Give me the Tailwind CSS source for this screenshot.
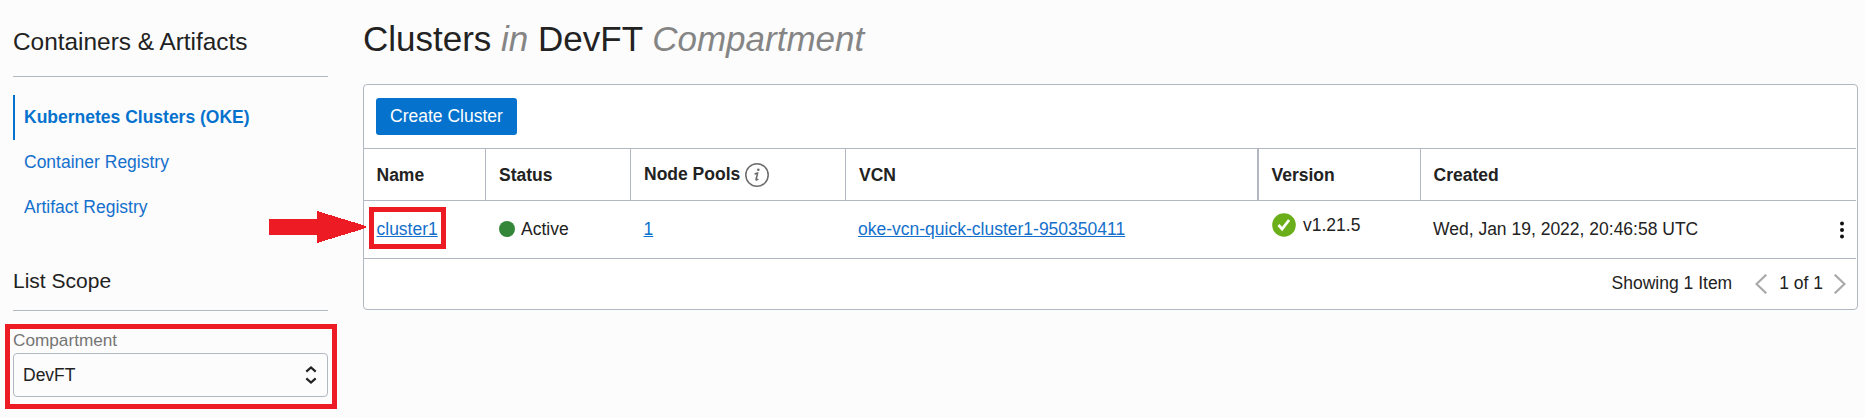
<!DOCTYPE html>
<html lang="en">
<head>
<meta charset="utf-8">
<title>Clusters</title>
<script src="https://cdn.jsdelivr.net/npm/@tailwindcss/browser@4"></script>
</head>
<body class="relative flex h-[418px] w-[1865px] overflow-hidden bg-[#fcfcfc] font-['Liberation_Sans',Arial,sans-serif] text-[17.5px] leading-5 text-[#222]">
  <aside class="w-[363px] shrink-0 pl-[13px] pr-[35px] pt-[27px]">
    <h2 class="h-[50px] border-b border-[#b2b8c1] text-[24.4px] leading-[30px] whitespace-nowrap">Containers &amp; Artifacts</h2>
    <nav class="mt-[18px] flex flex-col text-[#1470cc]">
      <a class="flex h-[45px] items-center border-l-2 border-[#0572ce] pb-[2px] pl-[9px] font-bold text-[#0572ce]">Kubernetes Clusters (OKE)</a>
      <a class="flex h-[45px] items-center pb-[2px] pl-[11px]">Container Registry</a>
      <a class="flex h-[45px] items-center pb-[2px] pl-[11px]">Artifact Registry</a>
    </nav>
    <h3 class="mt-[37px] h-11 border-b border-[#b2b8c1] text-[21px] leading-7">List Scope</h3>
    <label class="mt-[19px] block text-[17.2px] text-[#757575]">Compartment</label>
    <div class="mt-[3px] flex h-11 items-center justify-between rounded-[4px] border border-[#b2b8c1] pl-[9px] pr-[10px]">
      <span>DevFT</span>
      <svg class="h-5 w-3" viewBox="0 0 12 20" fill="none" stroke="#222" stroke-width="2.200"><path d="M1.300 6.600 6 2.400l4.700 4.200M1.300 13.400 6 17.600l4.700-4.200"/></svg>
    </div>
  </aside>

  <main class="w-[1495px] shrink-0 pt-[19px]">
    <h1 class="text-[35px] leading-10 whitespace-nowrap">Clusters <i class="text-[#858585]">in</i> DevFT <i class="text-[#858585]">Compartment</i></h1>
    <section class="mt-[25px] h-[226px] rounded-[4px] border border-[#b2b8c1] bg-white pr-px">
      <div class="flex h-[63px] items-start pl-3 pt-[13px]">
        <button class="h-[37px] w-[141px] rounded-[3px] bg-[#0572ce] pb-[2px] text-white whitespace-nowrap">Create Cluster</button>
      </div>
      <div class="grid h-[53px] grid-cols-[122px_145px_215px_413px_162px_1fr] border-y border-[#b2b8c1] font-bold">
        <div class="flex items-center border-r border-[#b2b8c1] pl-[12.5px]">Name</div>
        <div class="flex items-center border-r border-[#b2b8c1] pl-[13px]">Status</div>
        <div class="flex items-center gap-[5px] border-r border-[#b2b8c1] pl-[13px]"><span class="pb-[2px]">Node Pools</span>
          <svg class="mt-px size-6" viewBox="0 0 24 24" fill="none"><circle cx="12" cy="12" r="11.200" stroke="#6b6b6b" stroke-width="1.500"/><circle cx="13.300" cy="6.800" r="1.300" fill="#6b6b6b"/><path d="M9.600 11.300c1.100-1 2.200-1.500 3-1.300l-1.500 6.400c-.2 1 .8.8 2.200-.4" stroke="#6b6b6b" stroke-width="1.600"/></svg>
        </div>
        <div class="flex items-center border-r-2 border-[#b2b8c1] pl-[13px]">VCN</div>
        <div class="flex items-center border-r border-[#b2b8c1] pl-[12.5px]">Version</div>
        <div class="flex items-center pl-[12.5px]">Created</div>
      </div>
      <div class="grid h-[58px] grid-cols-[122px_145px_215px_413px_162px_1fr] items-center border-b border-[#b2b8c1] pb-[2px]">
        <div class="pl-[12.5px]"><a class="text-[#1470cc] underline">cluster1</a></div>
        <div class="flex items-center gap-[6px] pl-[13px]"><span class="mt-px size-4 rounded-full bg-[#348739]"></span>Active</div>
        <div class="pl-[12.5px]"><a class="text-[#0572ce] underline">1</a></div>
        <div class="pl-3"><a class="text-[#1470cc] underline">oke-vcn-quick-cluster1-950350411</a></div>
        <div class="mb-[7px] flex items-center gap-[7px] pl-[13px]">
          <svg class="size-6" viewBox="0 0 24 24"><circle cx="12" cy="12" r="11.800" fill="#6aaf1a"/><path d="m6.500 12 3.600 4 7-9" fill="none" stroke="#fff" stroke-width="2.800"/></svg>
          <span>v1.21.5</span>
        </div>
        <div class="flex items-center justify-between pl-3 pr-3"><span>Wed, Jan 19, 2022, 20:46:58 UTC</span>
          <svg class="mt-[2px] h-[18px] w-[4px]" viewBox="0 0 4 18" fill="#111"><circle cx="2" cy="2.500" r="2"/><circle cx="2" cy="9" r="2"/><circle cx="2" cy="15.500" r="2"/></svg>
        </div>
      </div>
      <div class="flex h-[50px] items-center justify-end pr-[10px] whitespace-nowrap">
        <span class="mb-[3px] mr-[23px]">Showing 1 Item</span>
        <svg class="mr-3 h-5 w-3" viewBox="0 0 12 20" fill="none" stroke="#a9a9a9" stroke-width="2.200"><path d="M11.300.7 1.500 10l9.800 9.300"/></svg>
        <span class="mb-[3px] mr-[11px]">1 of 1</span>
        <svg class="h-5 w-3" viewBox="0 0 12 20" fill="none" stroke="#a9a9a9" stroke-width="2.200"><path d="M.7.7 10.500 10 .7 19.300"/></svg>
      </div>
    </section>
  </main>

  <!-- Callouts over the page -->
  <div class="absolute left-[5px] top-[324px] h-[85px] w-[332px] border-5 border-[#ed1c24]"></div>
  <div class="absolute left-[369px] top-[207px] h-[42px] w-[77px] border-5 border-[#ed1c24]"></div>
  <svg class="absolute left-[269px] top-[211px] h-8 w-[97px]" viewBox="0 0 97 32" fill="#ed1c24" shape-rendering="crispEdges"><path d="M0 8h48V0l49 15v2L48 32v-8H0z"/></svg>
</body>
</html>
